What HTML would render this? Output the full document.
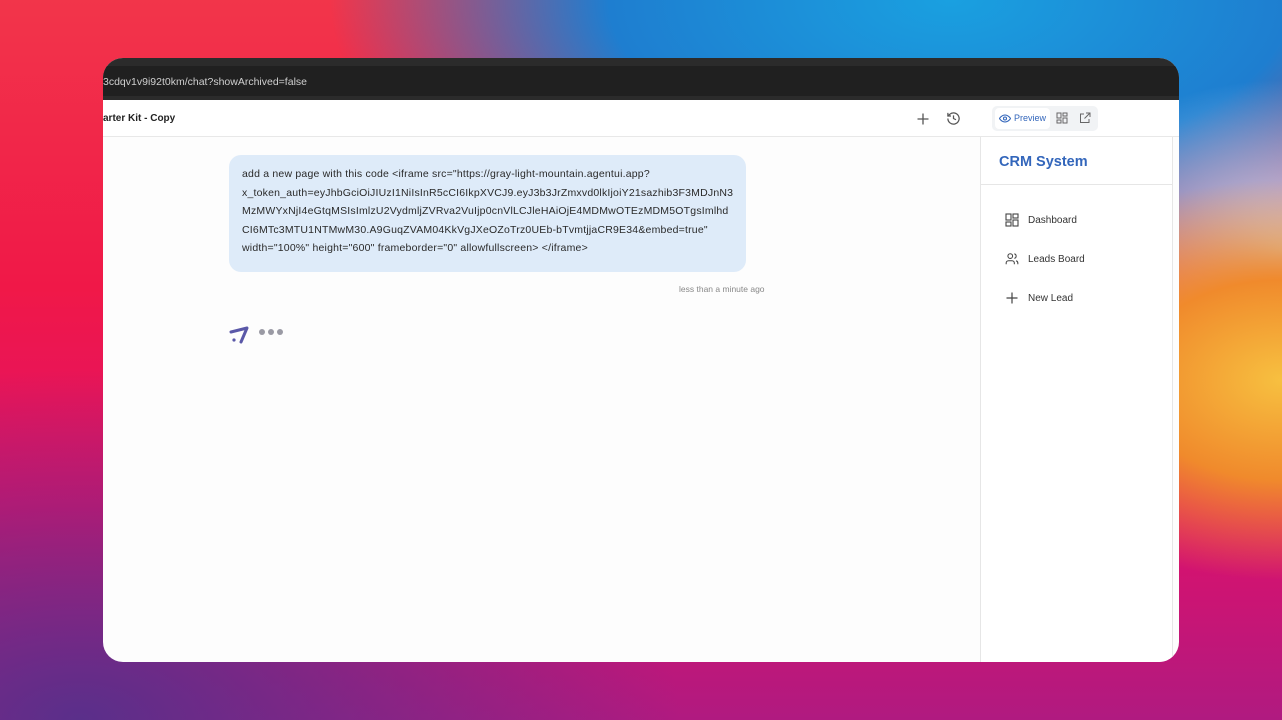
<!DOCTYPE html>
<html><head><style>
*{margin:0;padding:0;box-sizing:border-box}
body{width:1282px;height:720px;overflow:hidden;font-family:"Liberation Sans",sans-serif;position:relative;
background:
radial-gradient(ellipse 300px 200px at 1282px 380px,#f7c040 0%,#f08a2c 50%,rgba(240,80,50,0) 100%),
radial-gradient(ellipse 240px 170px at 1282px 250px,#c8e0f4 0%,rgba(150,190,230,0) 100%),
radial-gradient(ellipse 620px 300px at 950px 0px,#1aa0e0 0%,#1e7ed0 55%,rgba(30,90,200,0) 100%),
radial-gradient(ellipse 600px 350px at 80px 720px,#5a2f8a 0%,rgba(90,47,138,0) 100%),
linear-gradient(180deg,#f2354a 0%,#f01848 40%,#e0106a 70%,#b01a80 100%);}
.win{position:absolute;left:103px;top:58px;width:1076px;height:604px;border-radius:20px;overflow:hidden;background:#fdfdfd}
.top{position:absolute;left:0;top:0;width:100%;height:42px;background:#2b2b2b}
.addr{position:absolute;left:0;top:8px;width:100%;height:30px;background:#202020;color:#cfcfcf;font-size:10.5px;line-height:32px}
.hdr{position:absolute;left:0;top:42px;width:100%;height:37px;background:#fff;border-bottom:1px solid #e8e8e8}
.title{position:absolute;left:0;top:13px;font-size:10px;color:#222;font-weight:bold}
.bubble{position:absolute;left:126px;top:97px;width:517px;height:117px;background:#deebf9;border-radius:12px;padding:10px 13px;font-size:10.5px;line-height:18.5px;color:#2a2a2a;white-space:nowrap;letter-spacing:0.2px}
.time{position:absolute;left:576px;top:226px;font-size:8.5px;color:#888}
.side{position:absolute;left:877px;top:79px;width:193px;height:525px;border-left:1px solid #e6e6e6;border-right:1px solid #e6e6e6;background:#fff}
.crm{height:48px;border-bottom:1px solid #e6e6e6;font-size:14.5px;font-weight:bold;color:#3366bb;padding:17px 0 0 18px}
.item{position:absolute;left:24px;font-size:10px;color:#333;display:flex;align-items:center;gap:9px}
.dot{display:inline-block;width:6px;height:6px;border-radius:50%;background:#9a9aa4;margin-right:3px}
</style></head><body>
<div class="win">
<div class="top"><div class="addr">3cdqv1v9i92t0km/chat?showArchived=false</div></div>
<div class="hdr"><div class="title">arter Kit - Copy</div>
<svg style="position:absolute;left:813px;top:12px" width="14" height="14" viewBox="0 0 14 14"><path d="M7 1.5v11M1.5 7h11" stroke="#555" stroke-width="1.3"/></svg>
<svg style="position:absolute;left:843px;top:11px" width="15" height="15" viewBox="0 0 24 24" fill="none" stroke="#555" stroke-width="2"><path d="M3 12a9 9 0 1 0 3-6.7L3 8"/><path d="M3 3v5h5"/><path d="M12 7v5l4 2"/></svg>
<div style="position:absolute;left:889px;top:6px;width:106px;height:25px;background:#f1f3f5;border-radius:5px"></div>
<div style="position:absolute;left:892px;top:8px;width:55px;height:21px;background:#fff;border-radius:4px;font-size:9px;color:#3366bb;line-height:21px;padding-left:19px">Preview</div>
<svg style="position:absolute;left:896px;top:14px" width="12" height="9" viewBox="0 0 24 18" fill="none" stroke="#3366bb" stroke-width="2.2"><path d="M1 9s4-7 11-7 11 7 11 7-4 7-11 7S1 9 1 9z"/><circle cx="12" cy="9" r="3"/></svg>
<svg style="position:absolute;left:953px;top:12px" width="12" height="12" viewBox="0 0 12 12" fill="none" stroke="#666" stroke-width="1"><rect x="1" y="1" width="4" height="5"/><rect x="7" y="1" width="4" height="3"/><rect x="7" y="6" width="4" height="5"/><rect x="1" y="8" width="4" height="3"/></svg>
<svg style="position:absolute;left:976px;top:12px" width="12" height="12" viewBox="0 0 12 12" fill="none" stroke="#666" stroke-width="1"><path d="M5 2H1.5v8.5H10V7M7 1h4v4M11 1 5.5 6.5"/></svg>
</div>
<div class="bubble">add a new page with this code &lt;iframe src="https://gray-light-mountain.agentui.app?<br>x_token_auth=eyJhbGciOiJIUzI1NiIsInR5cCI6IkpXVCJ9.eyJ3b3JrZmxvd0lkIjoiY21sazhib3F3MDJnN3<br>MzMWYxNjI4eGtqMSIsImlzU2VydmljZVRva2VuIjp0cnVlLCJleHAiOjE4MDMwOTEzMDM5OTgsImlhd<br>CI6MTc3MTU1NTMwM30.A9GuqZVAM04KkVgJXeOZoTrz0UEb-bTvmtjjaCR9E34&amp;embed=true"<br>width="100%" height="600" frameborder="0" allowfullscreen&gt; &lt;/iframe&gt;</div>
<div class="time">less than a minute ago</div>
<svg style="position:absolute;left:126px;top:267px" width="22" height="20" viewBox="0 0 22 20"><path d="M2 7 L18 3 L12 17" fill="none" stroke="#5a58a8" stroke-width="3" stroke-linecap="round" stroke-linejoin="round"/><circle cx="5" cy="15" r="1.6" fill="#5a58a8"/></svg>
<div style="position:absolute;left:156px;top:270px;line-height:6px"><span class="dot"></span><span class="dot"></span><span class="dot"></span></div>
<div class="side"><div class="crm">CRM System</div>
<div class="item" style="top:76px"><svg width="14" height="14" viewBox="0 0 14 14" fill="none" stroke="#444" stroke-width="1.1"><rect x="1" y="1" width="5" height="6"/><rect x="8" y="1" width="5" height="4"/><rect x="8" y="7" width="5" height="6"/><rect x="1" y="9" width="5" height="4"/></svg>Dashboard</div>
<div class="item" style="top:115px"><svg width="14" height="14" viewBox="0 0 24 24" fill="none" stroke="#444" stroke-width="1.8"><circle cx="9" cy="7" r="4"/><path d="M2 21v-2a4 4 0 0 1 4-4h6a4 4 0 0 1 4 4v2M16 3.1a4 4 0 0 1 0 7.8M22 21v-2a4 4 0 0 0-3-3.9"/></svg>Leads Board</div>
<div class="item" style="top:154px"><svg width="14" height="14" viewBox="0 0 14 14"><path d="M7 1.5v11M1.5 7h11" stroke="#444" stroke-width="1.2"/></svg>New Lead</div>
</div>
</div>
</body></html>
